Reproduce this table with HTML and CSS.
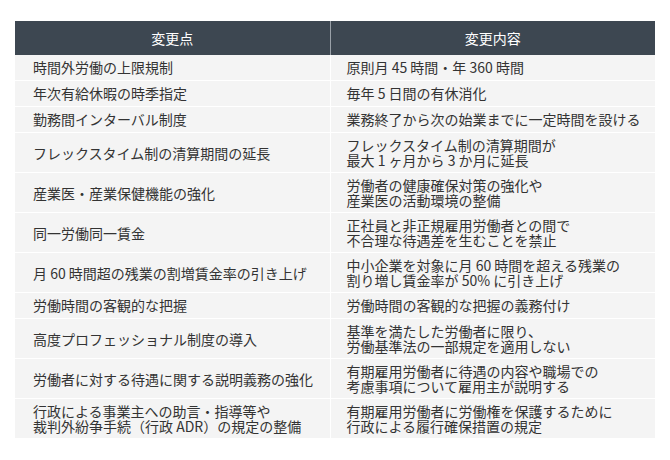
FILE: index.html
```html
<!DOCTYPE html>
<html lang="ja">
<head>
<meta charset="utf-8">
<title>働き方改革の変更点</title>
<link rel="stylesheet" href="styles.css">
</head>
<body>
<div class="page">
  <table class="changes">
    <colgroup>
      <col class="col-point">
      <col class="col-detail">
    </colgroup>
    <thead>
      <tr>
        <th>変更点</th>
        <th>変更内容</th>
      </tr>
    </thead>
    <tbody>
      <tr class="one">
        <td>時間外労働の上限規制</td>
        <td>原則月 45 時間・年 360 時間</td>
      </tr>
      <tr class="one">
        <td>年次有給休暇の時季指定</td>
        <td>毎年 5 日間の有休消化</td>
      </tr>
      <tr class="one">
        <td>勤務間インターバル制度</td>
        <td>業務終了から次の始業までに一定時間を設ける</td>
      </tr>
      <tr>
        <td>フレックスタイム制の清算期間の延長</td>
        <td>フレックスタイム制の清算期間が<br>最大 1 ヶ月から 3 か月に延長</td>
      </tr>
      <tr>
        <td>産業医・産業保健機能の強化</td>
        <td>労働者の健康確保対策の強化や<br>産業医の活動環境の整備</td>
      </tr>
      <tr>
        <td>同一労働同一賃金</td>
        <td>正社員と非正規雇用労働者との間で<br>不合理な待遇差を生むことを禁止</td>
      </tr>
      <tr>
        <td>月 60 時間超の残業の割増賃金率の引き上げ</td>
        <td>中小企業を対象に月 60 時間を超える残業の<br>割り増し賃金率が 50% に引き上げ</td>
      </tr>
      <tr class="one">
        <td>労働時間の客観的な把握</td>
        <td>労働時間の客観的な把握の義務付け</td>
      </tr>
      <tr>
        <td>高度プロフェッショナル制度の導入</td>
        <td>基準を満たした労働者に限り、<br>労働基準法の一部規定を適用しない</td>
      </tr>
      <tr>
        <td>労働者に対する待遇に関する説明義務の強化</td>
        <td>有期雇用労働者に待遇の内容や職場での<br>考慮事項について雇用主が説明する</td>
      </tr>
      <tr class="last">
        <td>行政による事業主への助言・指導等や<br>裁判外紛争手続（行政 ADR）の規定の整備</td>
        <td>有期雇用労働者に労働権を保護するために<br>行政による履行確保措置の規定</td>
      </tr>
    </tbody>
  </table>
</div>
</body>
</html>
```

FILE: styles.css
```css
html, body {
  margin: 0;
  padding: 0;
  background: #ffffff;
}

.page {
  padding: 21px 15px 0 15px;
  font-family: "Noto Sans CJK JP", "Noto Sans", sans-serif;
  font-size: 14px;
  color: #333333;
}

.changes {
  width: 640px;
  border-collapse: collapse;
  table-layout: fixed;
}

.col-point {
  width: 315px;
}

.col-detail {
  width: 325px;
}

.changes th {
  height: 34px;
  padding: 0;
  background: #3d4751;
  color: #ffffff;
  font-weight: 400;
  line-height: 15px;
  text-align: center;
  vertical-align: middle;
}

.changes th + th {
  border-left: 1px solid #9aa1a8;
}

.changes td {
  background: #f4f4f4;
  padding: 5px 0 4px 18px;
  line-height: 15px;
  text-align: left;
  vertical-align: middle;
  border-bottom: 1px solid #ffffff;
  white-space: nowrap;
}

.changes tr.one td {
  padding-top: 5px;
  padding-bottom: 5px;
}

.changes td + td {
  border-left: 1px solid #ffffff;
  padding-left: 16px;
}

.changes tr.last td {
  border-bottom: none;
}
```
